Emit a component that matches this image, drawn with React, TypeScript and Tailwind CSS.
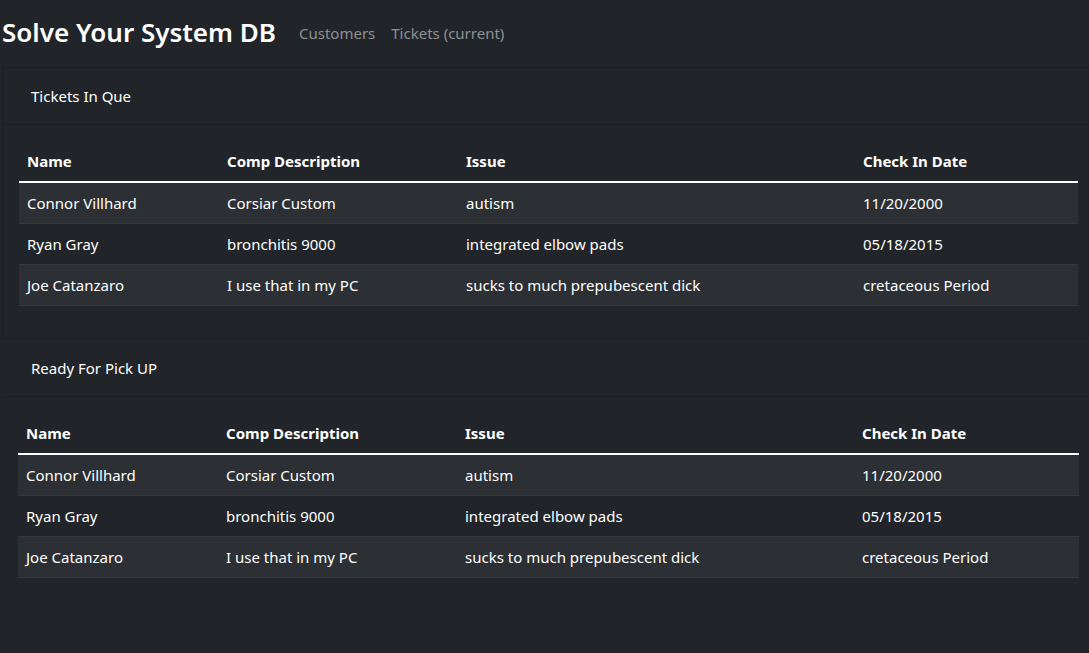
const rows = [
  { name: "Connor Villhard", desc: "Corsiar Custom", issue: "autism", date: "11/20/2000" },
  { name: "Ryan Gray", desc: "bronchitis 9000", issue: "integrated elbow pads", date: "05/18/2015" },
  { name: "Joe Catanzaro", desc: "I use that in my PC", issue: "sucks to much prepubescent dick", date: "cretaceous Period" },
];

function TicketTable() {
  return (
    <table className="mb-4 w-full border-collapse text-left text-[15px] leading-6 text-white">
      <thead>
        <tr className="border-b-2 border-white">
          <th className="w-[200px] px-2 py-2 font-bold">Name</th>
          <th className="w-[239px] px-2 py-2 font-bold">Comp Description</th>
          <th className="w-[397px] px-2 py-2 font-bold">Issue</th>
          <th className="px-2 py-2 font-bold">Check In Date</th>
        </tr>
      </thead>
      <tbody>
        {rows.map((r, i) => (
          <tr
            key={r.name}
            className={`border-b border-[#32383e] ${i % 2 === 0 ? "bg-[#2c3034]" : "bg-[#212529]"}`}>
            <td className="px-2 py-2">{r.name}</td>
            <td className="px-2 py-2">{r.desc}</td>
            <td className="px-2 py-2">{r.issue}</td>
            <td className="px-2 py-2">{r.date}</td>
          </tr>
        ))}
      </tbody>
    </table>
  );
}

export default function App() {
  return (
    <main
      className="min-h-[653px] overflow-hidden bg-[#212529] pl-px text-white"
      style={{ fontFamily: '"Noto Sans", "Open Sans", sans-serif' }}>
      <nav className="flex h-[67px] items-center gap-[23px] pb-1 pl-px">
        <span className="text-[26px] font-semibold leading-none">Solve Your System DB</span>
        <div className="flex gap-4 pt-[3px] text-[15px] text-[#8e9093]">
          <a>Customers</a>
          <a>Tickets (current)</a>
        </div>
      </nav>

      <section className="ml-px w-[1087px] border border-[#1c1f23]">
        <div className="flex h-[57px] items-center border-b border-[#1c1f23] px-[28px] pt-px text-[15px]">
          Tickets In Que
        </div>
        <div className="pb-4 pl-4 pr-[10px] pt-4">
          <TicketTable />
        </div>
      </section>

      <section className="w-[1088px] border border-transparent">
        <div className="flex h-[57px] items-center border-b border-[#1c1f23] px-[29px] pt-px text-[15px]">
          Ready For Pick UP
        </div>
        <div className="pb-4 pl-4 pr-[9px] pt-4">
          <TicketTable />
        </div>
      </section>
    </main>
  );
}
